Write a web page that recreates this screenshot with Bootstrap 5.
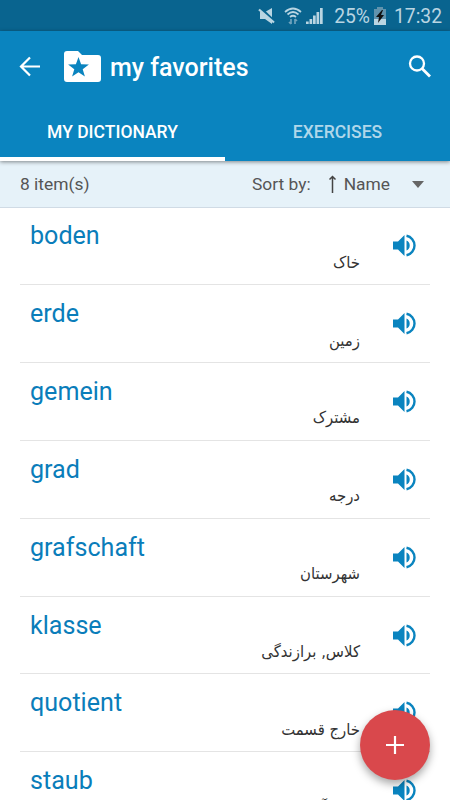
<!DOCTYPE html>
<html lang="en">
<head>
<meta charset="utf-8">
<meta name="viewport" content="width=device-width, initial-scale=1">
<title>my favorites</title>
<link href="https://cdn.jsdelivr.net/npm/bootstrap@5.3.0/dist/css/bootstrap.min.css" rel="stylesheet">
<style>
body{font-family:Roboto,"DejaVu Sans",sans-serif;height:800px;overflow:hidden;background:#fff}
.status-strip{height:31px;background:#09648f;color:#b9d5e2;font-size:19.3px;line-height:31px;padding:1px 8px 0 0}
.battery-level{margin-left:10px}
.clock{margin-left:8px}
.app-header{background:#0a84bf;height:130px;box-shadow:0 1px 4px rgba(0,0,0,.45);z-index:2}
.title-bar{height:72px;padding:0 18px}
.folder{margin-left:21px}
.title-text{font-size:25px;font-weight:500;line-height:30px;margin:2px 0 0 8px}
.tab-link{height:58px;font-size:17.5px;font-weight:500;line-height:58px;color:#b0d7ea;border-bottom:0 solid #fff}
.tab-link.active{color:#fff;border-bottom-width:4px}
.sort-bar{height:47px;background:#e6f2f9;border-bottom:1px solid #d0dbe5;color:#555;font-size:17.4px;padding:1px 25px 0 20px}
.sort-arrow{margin:0 7px 0 17px}
.sort-caret{margin-left:21px}
.word-list{margin-top:-.6px}
.word-row{height:77.83px;border-bottom:1px solid #e4e4e4;margin:0 20px;padding:0 13px 0 10px}
.word{color:#0a7dba;font-size:25.1px;line-height:30px;padding-top:14px}
.meaning{font-family:"DejaVu Sans",sans-serif;color:#333;font-size:16px;line-height:24px;margin-top:-.6px;transform:scaleX(.93);transform-origin:right}
.sound{width:24px;margin-left:33px}
.fab{right:20px;bottom:20px;width:70px;height:70px;background:#d9484c;box-shadow:0 4px 8px rgba(0,0,0,.35);z-index:3}
</style>
</head>
<body class="d-flex flex-column position-relative">
<svg class="d-none"><symbol id="speaker" viewBox="0 0 24 24"><path fill="#0a84bf" d="M0 7.500h5L11.500 1v21L5 15.500H0zM13.500 6.500a5.500 5.500 0 0 1 0 10z"/><path fill="none" stroke="#0a84bf" stroke-width="2.400" d="M13.500 1.700a10 10 0 0 1 0 19.600"/></symbol></svg>
<div class="status-strip d-flex justify-content-end align-items-center flex-shrink-0">
<svg width="18" height="18" viewBox="0 0 18 18" fill="#b9d5e2"><path d="M2 5h5l7-4v16l-7-5H2z"/><path d="M1 0l17 16" stroke="#09648f" stroke-width="3"/><path d="M1 2.500l15 13" stroke="#b9d5e2" stroke-width="2.200"/></svg>
<svg class="ms-2" width="18" height="20" viewBox="0 0 18 20" fill="none" stroke="#b9d5e2" stroke-width="1.700"><path d="M1 6Q9-1 17 6M3.500 8.500Q9 3.500 14.500 8.500M6 11Q9 8.500 12 11"/><path stroke="#6fa3bd" d="M7 13v5m-2-2l2 2M11 18v-5m2 2l-2-2"/></svg>
<svg class="ms-1" width="18" height="18" viewBox="0 0 18 18" fill="#b9d5e2"><path d="M0 14.500h2.700V17H0zM3.500 12h2.700v5H3.500zM7 8.500h2.700V17H7zM10.500 5h2.700v12h-2.700zM14 1h2.700v16H14z"/></svg>
<span class="battery-level">25%</span>
<svg class="ms-1" width="12" height="18" viewBox="0 0 12 18"><path fill="#6193ad" d="M3 0h6v2h3v10H0V2h3z"/><path fill="#b9d5e2" d="M0 12h12v6H0z"/><path fill="#111" d="M8 3L2 10h3l-1 6 6-8H7l2-5z"/></svg>
<span class="clock">17:32</span>
</div>
<header class="app-header position-relative text-white flex-shrink-0">
<div class="title-bar d-flex align-items-center">
<svg width="24" height="24" viewBox="0 0 24 24" fill="none" stroke="#fff" stroke-width="2.200"><path d="M22 11.500H3.500M12 2.500l-9 9 9 9"/></svg>
<svg class="folder" width="39" height="32" viewBox="0 0 39 32"><path fill="#fff" d="M4 0h11l4 4h16q3 0 3 3v21q0 3-3 3H4q-3 0-3-3V3q0-3 3-3z"/><path fill="#0a84bf" d="M15.500 6l2.600 7.200 7.800.3-6.200 4.700 2.200 7.300-6.400-4.300-6.400 4.300 2.200-7.300-6.200-4.700 7.800-.3z"/></svg>
<span class="title-text">my favorites</span>
<svg class="ms-auto" width="24" height="24" viewBox="0 0 24 24" fill="none" stroke="#fff"><circle cx="9" cy="8.500" r="7" stroke-width="2.300"/><path stroke-width="2.800" d="M14 13.500l8 8"/></svg>
</div>
<nav class="d-flex text-center">
<a class="tab-link active flex-fill w-50 text-decoration-none">MY DICTIONARY</a>
<a class="tab-link flex-fill w-50 text-decoration-none">EXERCISES</a>
</nav>
</header>
<div class="sort-bar d-flex align-items-center flex-shrink-0">
<span>8 item(s)</span><span class="ms-auto">Sort by:</span>
<svg class="sort-arrow" width="9" height="20" viewBox="0 0 9 20" fill="none" stroke="#444" stroke-width="1.500"><path d="M4.500 18V1.500M1.500 4.500l3-3 3 3"/></svg>
<span>Name</span>
<svg class="sort-caret" width="14" height="8" viewBox="0 0 14 8"><path fill="#666" d="M1 0h12L7 7z"/></svg>
</div>
<main class="word-list">
<div class="word-row d-flex"><div class="flex-grow-1"><div class="word">boden</div><div class="meaning" dir="rtl" lang="fa">خاک</div></div><svg class="sound" height="77"><use href="#speaker" y="27" width="24" height="24"/></svg></div>
<div class="word-row d-flex"><div class="flex-grow-1"><div class="word">erde</div><div class="meaning" dir="rtl" lang="fa">زمین</div></div><svg class="sound" height="77"><use href="#speaker" y="27" width="24" height="24"/></svg></div>
<div class="word-row d-flex"><div class="flex-grow-1"><div class="word">gemein</div><div class="meaning" dir="rtl" lang="fa">مشترک</div></div><svg class="sound" height="77"><use href="#speaker" y="27" width="24" height="24"/></svg></div>
<div class="word-row d-flex"><div class="flex-grow-1"><div class="word">grad</div><div class="meaning" dir="rtl" lang="fa">درجه</div></div><svg class="sound" height="77"><use href="#speaker" y="27" width="24" height="24"/></svg></div>
<div class="word-row d-flex"><div class="flex-grow-1"><div class="word">grafschaft</div><div class="meaning" dir="rtl" lang="fa">شهرستان</div></div><svg class="sound" height="77"><use href="#speaker" y="27" width="24" height="24"/></svg></div>
<div class="word-row d-flex"><div class="flex-grow-1"><div class="word">klasse</div><div class="meaning" dir="rtl" lang="fa">کلاس, برازندگی</div></div><svg class="sound" height="77"><use href="#speaker" y="27" width="24" height="24"/></svg></div>
<div class="word-row d-flex"><div class="flex-grow-1"><div class="word">quotient</div><div class="meaning" dir="rtl" lang="fa">خارج قسمت</div></div><svg class="sound" height="77"><use href="#speaker" y="27" width="24" height="24"/></svg></div>
<div class="word-row d-flex"><div class="flex-grow-1"><div class="word">staub</div><div class="meaning" dir="rtl" lang="fa">غبار, آشوب</div></div><svg class="sound" height="77"><use href="#speaker" y="27" width="24" height="24"/></svg></div>
</main>
<button class="fab btn rounded-circle border-0 p-0 position-absolute d-flex align-items-center justify-content-center" aria-label="Add"><svg width="18" height="18" viewBox="0 0 18 18" stroke="#fff" stroke-width="2.200"><path d="M9 0v18M0 9h18"/></svg></button>
<script src="https://cdn.jsdelivr.net/npm/bootstrap@5.3.0/dist/js/bootstrap.bundle.min.js"></script>
</body>
</html>
